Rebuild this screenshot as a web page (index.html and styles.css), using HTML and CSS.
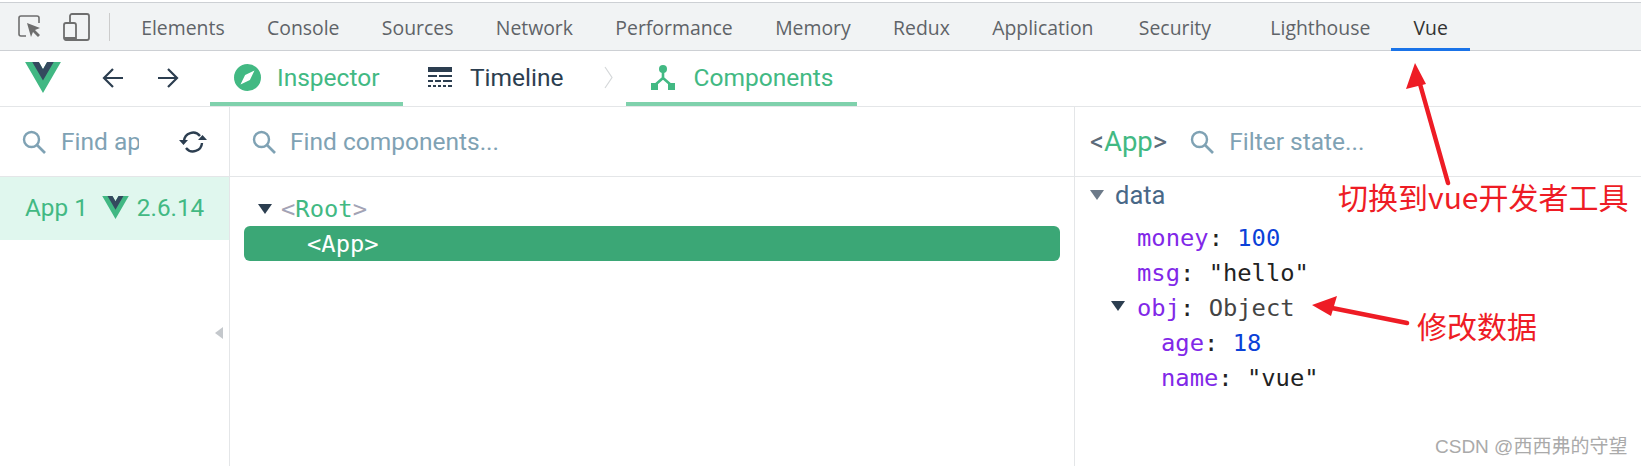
FILE: index.html
```html
<!DOCTYPE html>
<html lang="en">
  <head>
    <meta charset="UTF-8" />
    <title>Vue devtools</title>
    <link rel="stylesheet" href="styles.css">
  </head>
  <body>
    <svg class="defs" width="0" height="0">
      <symbol id="vue-logo" viewBox="0 0 261.76 226.69">
        <path fill="#41b883" d="M161.096.001l-30.225 52.351L100.647.001H-.005l130.877 226.688L261.749.001z" />
        <path fill="#34495e" d="M161.096.001l-30.225 52.351L100.647.001H52.346l78.526 136.01L209.398.001z" />
      </symbol>
      <symbol id="search" viewBox="0 0 24 24">
        <circle cx="9.5" cy="9.5" r="7.5" fill="none" stroke="#7fa2b4" stroke-width="2.4" />
        <path d="M15 15l8 8" fill="none" stroke="#7fa2b4" stroke-width="2.6" />
      </symbol>
    </svg>

    <div class="devtools-bar">
      <div class="bar-icons">
        <svg class="icon-inspect" viewBox="0 0 23 23">
          <path d="M8 21H3a2 2 0 0 1-2-2V3a2 2 0 0 1 2-2h16a2 2 0 0 1 2 2v5" fill="none" stroke="#6e6e6e" stroke-width="1.6" />
          <path d="M9 8l13 5-5 2 5 5-2 2-5-5-2 5z" fill="#6e6e6e" />
        </svg>
        <svg class="icon-device" viewBox="0 0 27 28">
          <path d="M7 10V3a2 2 0 0 1 2-2h15a2 2 0 0 1 2 2v22a2 2 0 0 1-2 2H3a2 2 0 0 1-2-2V12a2 2 0 0 1 2-2h8a2 2 0 0 1 2 2v15" fill="none" stroke="#6e6e6e" stroke-width="1.8" />
          <path d="M1 24h12v3H1z" fill="#6e6e6e" />
        </svg>
        <span class="bar-sep"></span>
      </div>
      <span class="tab">Elements</span>
      <span class="tab">Console</span>
      <span class="tab">Sources</span>
      <span class="tab">Network</span>
      <span class="tab">Performance</span>
      <span class="tab">Memory</span>
      <span class="tab">Redux</span>
      <span class="tab tab-wide">Application</span>
      <span class="tab tab-gap">Security</span>
      <span class="tab">Lighthouse</span>
      <span class="tab tab-active">Vue</span>
    </div>

    <div class="vue-bar">
      <svg class="logo"><use href="#vue-logo" /></svg>
      <svg class="nav-arrow" viewBox="0 0 22 22">
        <path d="M21 11H2M11 2l-9 9 9 9" fill="none" stroke="#2c3e50" stroke-width="2.2" />
      </svg>
      <svg class="nav-arrow nav-next" viewBox="0 0 22 22">
        <path d="M1 11h19M11 2l9 9-9 9" fill="none" stroke="#2c3e50" stroke-width="2.2" />
      </svg>
      <div class="mode mode-inspector on">
        <svg class="compass" viewBox="0 0 27 27">
          <circle cx="13.5" cy="13.5" r="13.5" fill="#42b983" />
          <path d="M20.5 6.5l-4.6 9.4-4.8-4.8zM6.5 20.5l4.6-9.4 4.8 4.8z" fill="#fff" />
        </svg>
        <span>Inspector</span>
      </div>
      <div class="mode mode-timeline">
        <svg class="timeline-icon" viewBox="0 0 24 21">
          <path d="M0 0h24v5H0zM0 8h9v2H0zM11 8h13v2H11zM0 13h5v2H0zM7 13h6v2H7zM15 13h9v2H15zM0 18h3v2H0zM5 18h3v2H5zM10 18h3v2h-3zM15 18h3v2h-3zM20 18h4v2h-4z" fill="#2c3e50" />
        </svg>
        <span>Timeline</span>
      </div>
      <svg class="crumb" viewBox="0 0 9 23">
        <path d="M1 1l7 10.500-7 10.500" fill="none" stroke="#d5d8da" stroke-width="1.200" />
      </svg>
      <div class="mode mode-components on">
        <svg class="tree-icon" viewBox="0 0 24 25">
          <circle cx="12" cy="4" r="4" fill="#42b983" />
          <path d="M12 7v8M12 13l-8 7M12 13l8 7" fill="none" stroke="#42b983" stroke-width="2.600" />
          <path d="M0 18h7v7H0zM17 18h7v7h-7z" fill="#42b983" />
        </svg>
        <span>Components</span>
      </div>
    </div>

    <div class="panes">
      <div class="pane-apps">
        <div class="pane-head">
          <svg class="search-icon"><use href="#search" /></svg>
          <span class="placeholder find-apps">Find apps...</span>
          <svg class="refresh" viewBox="0 0 28 24">
            <path d="M5 11a9 9 0 0 1 16-5M23 13a9 9 0 0 1-16 5" fill="none" stroke="#2c3e50" stroke-width="2.400" />
            <path d="M0 10h9l-4.500 5zM19 10h9l-4.500-5z" fill="#2c3e50" />
          </svg>
        </div>
        <div class="app-row">
          <span>App 1</span>
          <svg class="logo-small"><use href="#vue-logo" /></svg>
          <span>2.6.14</span>
        </div>
        <span class="collapse"></span>
      </div>

      <div class="pane-tree">
        <div class="pane-head">
          <svg class="search-icon"><use href="#search" /></svg>
          <span class="placeholder">Find components...</span>
        </div>
        <div class="tree">
          <div class="tree-root"><i class="caret"></i><b>&lt;</b><em>Root</em><b>&gt;</b></div>
          <div class="tree-selected">&lt;App&gt;</div>
        </div>
      </div>

      <div class="pane-state">
        <div class="pane-head">
          <span class="state-title"><b>&lt;</b>App<b>&gt;</b></span>
          <svg class="search-icon"><use href="#search" /></svg>
          <span class="placeholder">Filter state...</span>
        </div>
        <div class="state">
          <div class="state-group"><i class="caret caret-grey"></i>data</div>
          <div class="row"><span class="key">money</span>: <span class="num">100</span></div>
          <div class="row"><span class="key">msg</span>: "hello"</div>
          <div class="row"><i class="caret caret-row"></i><span class="key">obj</span>: <span class="obj">Object</span></div>
          <div class="row row-sub"><span class="key">age</span>: <span class="num">18</span></div>
          <div class="row row-sub"><span class="key">name</span>: "vue"</div>
        </div>
      </div>
    </div>

    <!-- annotations drawn on top of the screenshot -->
    <svg class="arrows" viewBox="0 0 1641 466">
      <path d="M1448 183L1420 84M1407 323L1332 308" fill="none" stroke="#ee1c25" stroke-width="4.500" stroke-linecap="round" />
      <path d="M1415 63l-9 26 20-5zM1312 305l25-9-6 20z" fill="#ee1c25" />
    </svg>
    <span class="note note-switch">切换到vue开发者工具</span>
    <span class="note note-edit">修改数据</span>
    <span class="watermark">CSDN @西西弗的守望</span>
  </body>
</html>
```

FILE: styles.css
```css
* {
  box-sizing: border-box;
}
html, body {
  margin: 0;
  height: 100%;
  overflow: hidden;
}
body {
  position: relative;
  padding-top: 2px;
  background-color: #fff;
  font-family: Roboto, sans-serif;
}
.defs {
  position: absolute;
}

/* chrome devtools tabs */
.devtools-bar {
  display: flex;
  align-items: stretch;
  height: 49px;
  background-color: #f1f3f4;
  border-top: 1px solid #cdd0d4;
  border-bottom: 1px solid #cdd0d4;
  font-family: "Open Sans", sans-serif;
  font-size: 19.4px;
  color: #5f6368;
}
.bar-icons {
  display: flex;
  align-items: center;
  width: 120px;
  padding-left: 18px;
}
.icon-inspect {
  width: 23px;
  height: 23px;
  margin-right: 22px;
}
.icon-device {
  width: 27px;
  height: 28px;
}
.bar-sep {
  width: 1px;
  height: 28px;
  margin-left: 19px;
  background-color: #ccc;
}
.tab {
  display: flex;
  align-items: center;
  padding: 3px 21.2px 0;
  margin-bottom: -1px;
  border-bottom: 3px solid transparent;
}
.tab-wide {
  margin-right: 3px;
}
.tab-gap {
  margin-right: 17px;
}
.tab-active {
  padding: 3px 22px 0;
  color: #333;
  border-bottom-color: #1a73e8;
}

/* vue devtools header */
.vue-bar {
  display: flex;
  align-items: stretch;
  height: 56px;
  border-bottom: 1px solid #e4e6e8;
  padding-left: 25px;
  font-size: 24.5px;
  color: #2c3e50;
}
.logo {
  width: 36px;
  height: 31px;
  margin-top: 11px;
}
.nav-arrow {
  width: 22px;
  height: 22px;
  margin: 16px 0 0 41px;
}
.nav-next {
  margin-left: 33px;
}
.mode {
  display: flex;
  align-items: center;
  gap: 16px;
  padding-top: 2px;
  border-bottom: 4px solid transparent;
}
.mode.on {
  color: #42b983;
  border-bottom-color: #7fd1ac;
}
.mode-inspector {
  width: 193px;
  margin-left: 31px;
  padding-left: 24px;
}
.mode-timeline {
  margin-left: 25px;
  gap: 18px;
}
.mode-components {
  width: 231px;
  margin-left: 13px;
  padding-left: 25px;
  gap: 19px;
}
.compass {
  width: 27px;
  height: 27px;
}
.timeline-icon {
  width: 24px;
  height: 21px;
}
.tree-icon {
  width: 24px;
  height: 25px;
}
.crumb {
  width: 9px;
  height: 23px;
  margin: 15px 0 0 40px;
}

/* three panes */
.panes {
  display: flex;
  height: 359px;
}
.pane-apps {
  position: relative;
  width: 230px;
  border-right: 1px solid #e4e6e8;
}
.pane-tree {
  width: 845px;
  border-right: 1px solid #e4e6e8;
}
.pane-state {
  flex: 1;
}
.pane-head {
  display: flex;
  align-items: center;
  height: 70px;
  padding-left: 22px;
  border-bottom: 1px solid #e4e6e8;
  font-size: 24.5px;
}
.pane-state .pane-head {
  padding-left: 15px;
}
.search-icon {
  flex: none;
  width: 24px;
  height: 24px;
  margin-right: 15px;
}
.pane-tree .search-icon {
  margin-right: 14px;
}
.placeholder {
  color: #7fa2b4;
  white-space: nowrap;
}
.find-apps {
  width: 78px;
  overflow: hidden;
}
.refresh {
  width: 28px;
  height: 24px;
  margin-left: 40px;
}
.state-title {
  margin-right: 23px;
  font-size: 27.5px;
  color: #42b983;
}
.state-title b {
  font-weight: 400;
  color: #5c6b7a;
}

.app-row {
  display: flex;
  align-items: center;
  height: 63px;
  padding: 0 0 2px 25px;
  gap: 8px;
  background-color: #e0f7ee;
  color: #42b983;
  font-size: 24.3px;
}
.logo-small {
  width: 27px;
  height: 23px;
  margin-left: 6px;
}
.collapse {
  position: absolute;
  top: 220px;
  left: 215px;
  border-style: solid;
  border-width: 6px 8px 6px 0;
  border-color: transparent #c4c8cc transparent transparent;
}

.tree {
  padding: 15px 14px 0;
  font-family: "DejaVu Sans Mono", monospace;
  font-size: 23.8px;
}
.tree-root {
  display: flex;
  align-items: center;
  height: 34px;
  padding-left: 14px;
  color: #42b983;
}
.tree-root b {
  font-weight: 400;
  color: #a3a3b5;
}
.tree-root em {
  font-style: normal;
}
.tree-selected {
  height: 35px;
  line-height: 37px;
  padding-left: 63px;
  background-color: #3ba776;
  border-radius: 6px;
  color: #fff;
}
.caret {
  display: inline-block;
  width: 0;
  height: 0;
  margin-right: 9px;
  border-style: solid;
  border-width: 10px 7px 0;
  border-color: #2c3e50 transparent transparent;
}

.state {
  font-size: 25.5px;
}
.state-group {
  display: flex;
  align-items: center;
  height: 44px;
  padding: 0 0 8px 15px;
  color: #486887;
}
.caret-grey {
  margin-right: 11px;
  border-top-color: #6c7a89;
}
.row {
  position: relative;
  height: 35px;
  line-height: 35px;
  padding-left: 62px;
  font-family: "DejaVu Sans Mono", monospace;
  font-size: 23.8px;
  color: #222;
  white-space: pre;
}
.row-sub {
  padding-left: 86px;
}
.key {
  color: #8128e8;
}
.num {
  color: #0b41d8;
}
.obj {
  color: #444;
}
.caret-row {
  position: absolute;
  top: 10px;
  left: 36px;
  margin: 0;
}

/* red notes and watermark lie over the panes */
.arrows {
  position: absolute;
  top: 0;
  left: 0;
  width: 1641px;
  height: 466px;
  pointer-events: none;
}
.note {
  position: absolute;
  color: #ee1c25;
  font-family: "Noto Sans CJK SC", sans-serif;
  font-size: 30px;
  line-height: 40px;
  white-space: nowrap;
}
.note-switch {
  top: 176px;
  left: 1338px;
}
.note-edit {
  top: 305px;
  left: 1417px;
}
.watermark {
  position: absolute;
  top: 435px;
  left: 1435px;
  color: #aaa;
  font-family: "Liberation Sans", "Noto Sans CJK SC", sans-serif;
  font-size: 19px;
  line-height: 24px;
  white-space: nowrap;
}
```
